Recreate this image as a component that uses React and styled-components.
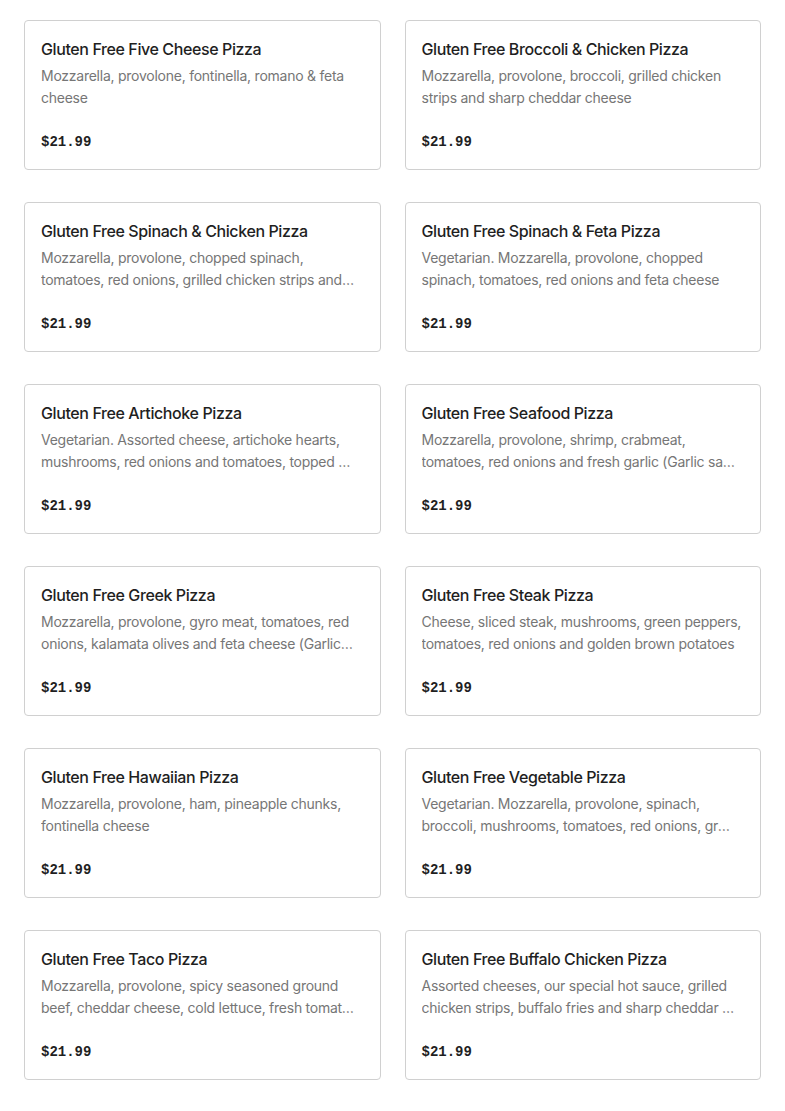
import React from 'react';
import styled, { createGlobalStyle } from 'styled-components';

const items = [
  ['Gluten Free Five Cheese Pizza', 'Mozzarella, provolone, fontinella, romano & feta', 'cheese'],
  ['Gluten Free Broccoli & Chicken Pizza', 'Mozzarella, provolone, broccoli, grilled chicken', 'strips and sharp cheddar cheese'],
  ['Gluten Free Spinach & Chicken Pizza', 'Mozzarella, provolone, chopped spinach,', 'tomatoes, red onions, grilled chicken strips and feta cheese'],
  ['Gluten Free Spinach & Feta Pizza', 'Vegetarian. Mozzarella, provolone, chopped', 'spinach, tomatoes, red onions and feta cheese'],
  ['Gluten Free Artichoke Pizza', 'Vegetarian. Assorted cheese, artichoke hearts,', 'mushrooms, red onions and tomatoes, topped with feta cheese'],
  ['Gluten Free Seafood Pizza', 'Mozzarella, provolone, shrimp, crabmeat,', 'tomatoes, red onions and fresh garlic (Garlic sauce base)'],
  ['Gluten Free Greek Pizza', 'Mozzarella, provolone, gyro meat, tomatoes, red', 'onions, kalamata olives and feta cheese (Garlic sauce base)'],
  ['Gluten Free Steak Pizza', 'Cheese, sliced steak, mushrooms, green peppers,', 'tomatoes, red onions and golden brown potatoes'],
  ['Gluten Free Hawaiian Pizza', 'Mozzarella, provolone, ham, pineapple chunks,', 'fontinella cheese'],
  ['Gluten Free Vegetable Pizza', 'Vegetarian. Mozzarella, provolone, spinach,', 'broccoli, mushrooms, tomatoes, red onions, green peppers and black olives'],
  ['Gluten Free Taco Pizza', 'Mozzarella, provolone, spicy seasoned ground', 'beef, cheddar cheese, cold lettuce, fresh tomatoes and taco sauce'],
  ['Gluten Free Buffalo Chicken Pizza', 'Assorted cheeses, our special hot sauce, grilled', 'chicken strips, buffalo fries and sharp cheddar cheese'],
  ['Gluten Free Pepperoni Pizza', 'Mozzarella, provolone and pepperoni', ''],
  ['Gluten Free BBQ Chicken Pizza', 'BBQ sauce, mozzarella, grilled chicken and red', 'onions'],
];

const App = () => {
  return (
    <>
      <GlobalStyle />
      <Grid>
        {items.map(([name, first, rest]) => (
          <Card key={name}>
            <Title>{name}</Title>
            <Desc>
              <DescLine>{first}</DescLine>
              <DescLine $clip>{rest}</DescLine>
            </Desc>
            <Price>$21.99</Price>
          </Card>
        ))}
      </Grid>
    </>
  );
};

const GlobalStyle = createGlobalStyle`
  body {
    margin: 0;
    background: #fff;
    font-family: Inter, "Liberation Sans", sans-serif;
  }
`;

const Grid = styled.div`
  display: grid;
  grid-template-columns: 1fr 1fr;
  column-gap: 24px;
  row-gap: 32px;
  padding: 20px 24px;
`;

const Card = styled.div`
  border: 1px solid #d0d0d0;
  border-radius: 4px;
  padding: 16px;
  display: flex;
  flex-direction: column;
  min-width: 0;
`;

const Title = styled.div`
  font-size: 16px;
  line-height: 24px;
  font-weight: 500;
  letter-spacing: -0.4px;
  color: #1f1f1f;
`;

const Desc = styled.div`
  margin-top: 4px;
  font-size: 14px;
  line-height: 22px;
  letter-spacing: -0.25px;
  color: #767676;
  height: 44px;
`;

const DescLine = styled.div`
  height: 22px;
  white-space: nowrap;
  overflow: ${(p) => (p.$clip ? 'hidden' : 'visible')};
  text-overflow: ellipsis;
  padding-right: ${(p) => (p.$clip ? '9px' : '0')};
`;

const Price = styled.div`
  margin-top: 23px;
  font-family: "Liberation Mono", monospace;
  font-weight: 700;
  font-size: 14px;
  line-height: 21px;
  color: #1f1f1f;
`;

export default App;
